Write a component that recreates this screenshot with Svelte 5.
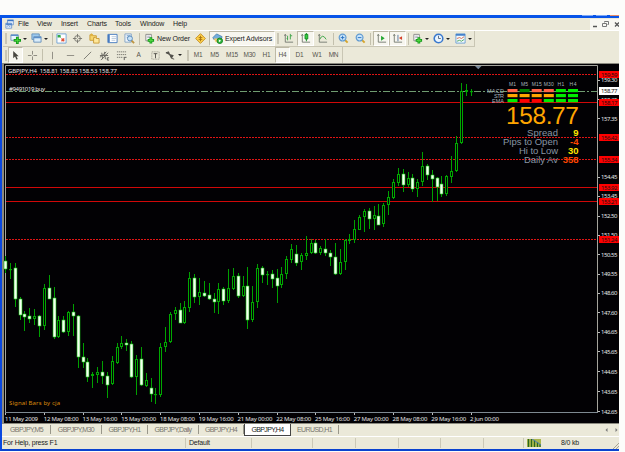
<script lang="ts">
    type Tool = { kind: string; w: number; icon?: string; text?: string; drop?: boolean; on?: boolean };

    const menus = [
        { text: 'File', w: 19 }, { text: 'View', w: 24 }, { text: 'Insert', w: 26 },
        { text: 'Charts', w: 28 }, { text: 'Tools', w: 25 }, { text: 'Window', w: 33 }, { text: 'Help', w: 20 }
    ];

    // all icons are drawn on a 12x12 grid
    const sheetPlus = '<path d="M2 1.5h6v7H2z" fill="#fafafa" stroke="#8a8a88"/><path d="M3.5 3.5h3M3.5 5h3" stroke="#aab"/><path d="M7.5 4.5v7M4 8h7" stroke="#119b18" stroke-width="3"/><path d="M7.5 5.5v5M5 8h5" stroke="#50d640" stroke-width="1.2"/>';
    const cross = '<circle cx="6" cy="6" r="3.2" fill="none" stroke="#77766f"/><path d="M6 1v4M6 7v4M1 6h4M7 6h4" stroke="#77766f"/>';
    const axes = '<path d="M2.5 1.5v8.5H11M1.5 3l1-1.5L3.500 3" fill="none" stroke="#747b70"/>';
    const lens = '<path d="M7.500 7.500l3 3" stroke="#d6a52c" stroke-width="2.2"/><circle cx="5" cy="5" r="3.700" fill="#c8e4fa" stroke="#629bd0" stroke-width="1.3"/>';
    const icons: Record<string, string> = {
        app: '<path d="M3 1h7v6H3zM1 5h7v6H1z" fill="#eef6ff" stroke="#6791cb"/><path d="M3 2h7M1 6h7" stroke="#3976c7" stroke-width="1.500"/><path d="M2 9l2-1 2 1 1-1" stroke="#6791cb" fill="none"/>',
        chartNew: '<path d="M1 2h8v6H1z" fill="#e9f4ff" stroke="#7797bd"/><path d="M1 2.500h8" stroke="#5b8fca" stroke-width="1.500"/><path d="M8 4v8M4 8h8" stroke="#119b18" stroke-width="3"/><path d="M8 5v6M5 8h6" stroke="#50d640"/>',
        profiles: '<path d="M1 1h8v6H1z" fill="#9ccaef" stroke="#6791bb"/><path d="M3 4h8v6H3z" fill="#d9ecfa" stroke="#6791bb"/><path d="M3 5h8" stroke="#5b8fca" stroke-width="1.500"/>',
        market: '<path d="M1 1h10v10H1z" fill="#fff" stroke="#6fa2d5"/><path d="M2.500 5V3H5M3 3l2 2" stroke="#2fa846" stroke-width="1.500" fill="none"/><path d="M6 6l3 3M9 6L6 9" stroke="#e04f35" stroke-width="1.500"/>',
        cross,
        navigator: '<path d="M1 2h3l1 1h3v5H1z" fill="#f6d66d" stroke="#c99a36"/><path d="M5 5h2l1 1h3v5H5z" fill="#ffe89a" stroke="#c99a36"/><path d="M2 1l2 2" stroke="#deb13e" stroke-width="2"/>',
        terminal: '<path d="M1 1.500h10v9H1z" fill="#fff" stroke="#4479bf"/><path d="M2 2v8" stroke="#4479bf" stroke-width="2"/><path d="M5 4h5M5 6h5M5 8h4" stroke="#b9cadd"/>',
        tester: '<path d="M1 1h7v9H1z" fill="#edf4fa" stroke="#85a5c5"/><path d="M3 3h4M3 5h2" stroke="#6f9bc5"/><path d="M8 8l3 3" stroke="#bd9440" stroke-width="2"/><circle cx="6.500" cy="6" r="2.700" fill="#c7e2f6" stroke="#5688bb"/>',
        order: sheetPlus,
        meta: '<path d="M6 .7L11.300 6 6 11.300.7 6z" fill="#ffd34b" stroke="#c28a20"/><path d="M6 3v6M4 5h4M4 7h4" stroke="#a77310"/>',
        expert: '<path d="M1 5l4-4 6 3-1 3H2z" fill="#74aedb" stroke="#4e86b4"/><path d="M2 6h6v4H4z" fill="#f4c969"/><circle cx="8.500" cy="8.500" r="3" fill="#31b63d" stroke="#118321"/><path d="M7.500 7v3L10 8.500z" fill="#fff"/>',
        bars: axes + '<path d="M5 3v5M5 6H4M8 1v6M8 3h2" stroke="#39a244"/>',
        candles: axes + '<path d="M7 0v9" stroke="#128b20"/><path d="M5.500 1.500h3v5h-3z" fill="#37cd41" stroke="#128b20"/>',
        line: axes + '<path d="M3 7q3-7 7 0" fill="none" stroke="#39a244"/>',
        zoomIn: lens + '<path d="M5 3v4M3 5h4" stroke="#2872bf"/>',
        zoomOut: lens + '<path d="M3 5h4" stroke="#2872bf"/>',
        scroll: axes + '<path d="M5.500 3v5.500L9.500 5.700z" fill="#25a733"/>',
        shift: axes + '<path d="M6.500 2v7" stroke="#55749b"/><path d="M11 3.500v4L7.500 5.500z" fill="#d5422b"/>',
        clock: '<circle cx="6" cy="6" r="4.700" fill="#e9f4ff" stroke="#3978cd" stroke-width="1.700"/><path d="M6 3v3h2.500" fill="none" stroke="#53657b"/>',
        template: '<path d="M1 1h10v10H1z" fill="#f4faff" stroke="#6c9fd4"/><path d="M1 2h10" stroke="#4481ca" stroke-width="2"/><path d="M2 6l3-1 2 1 3-2" stroke="#d0694a" fill="none"/><path d="M2 9l3-1 2 1 3-2" stroke="#4aa65c" fill="none"/>',
        cursor: '<path d="M3.500 1v8l2-1.800L7 10.500l1.500-.7L7 6.800h2.500z" fill="#484740"/>',
        plus: '<path d="M6 1v4M6 7v4M1 6h4M7 6h4" stroke="#85847b"/>',
        vert: '<path d="M6 2v8" stroke="#8b8a80"/>',
        horiz: '<path d="M2 6h8" stroke="#8b8a80"/>',
        trend: '<path d="M2 10l8-8" stroke="#77766d"/>',
        channel: '<path d="M1 8l7-6M2 11l8-8M3 3l1 7M6 2l1 8M1 6h9" stroke="#67665f"/><path d="M9 8.500h2M9 11h2M9 8.500V11" stroke="#333" stroke-width=".8"/>',
        fibo: '<path d="M1 2h10M1 5h10M1 8h7" stroke="#77766d" stroke-dasharray="1.500 .7"/><path d="M9 8h2.500M9 8v3" stroke="#333" stroke-width=".8"/>',
        label: '<path d="M2 2h8v8H2z" fill="none" stroke="#8c8b80" stroke-dasharray="1 1"/><path d="M4 4h4M6 4v5" stroke="#4f4e48"/>',
        arrows: '<path d="M1 3l3-1 1 3zM5 5l4 1-2 3zM7 9l3 1" fill="#4f4e48" stroke="#4f4e48"/>'
    };

    const mainTools: Tool[] = [
        { kind: 'grip', w: 6 },
        { kind: 'btn', icon: 'chartNew', w: 21, drop: true },
        { kind: 'btn', icon: 'profiles', w: 21, drop: true },
        { kind: 'sep', w: 3 },
        { kind: 'btn', icon: 'market', w: 15 },
        { kind: 'btn', icon: 'cross', w: 17 },
        { kind: 'btn', icon: 'navigator', w: 17 },
        { kind: 'btn', icon: 'terminal', w: 18 },
        { kind: 'btn', icon: 'tester', w: 16 },
        { kind: 'sep', w: 4 },
        { kind: 'btn', icon: 'order', text: 'New Order', w: 51 },
        { kind: 'btn', icon: 'meta', w: 17 },
        { kind: 'btn', icon: 'expert', text: 'Expert Advisors', w: 66, on: true },
        { kind: 'grip', w: 5 },
        { kind: 'btn', icon: 'bars', w: 17 },
        { kind: 'btn', icon: 'candles', w: 17, on: true },
        { kind: 'btn', icon: 'line', w: 17 },
        { kind: 'sep', w: 4 },
        { kind: 'btn', icon: 'zoomIn', w: 17 },
        { kind: 'btn', icon: 'zoomOut', w: 16 },
        { kind: 'sep', w: 5 },
        { kind: 'btn', icon: 'scroll', w: 16, on: true },
        { kind: 'btn', icon: 'shift', w: 17, on: true },
        { kind: 'sep', w: 5 },
        { kind: 'btn', icon: 'order', w: 21, drop: true },
        { kind: 'btn', icon: 'clock', w: 22, drop: true },
        { kind: 'btn', icon: 'template', w: 20, drop: true }
    ];

    const lineTools: Tool[] = [
        { kind: 'grip', w: 5 },
        { kind: 'btn', icon: 'cursor', w: 15, on: true },
        { kind: 'btn', icon: 'plus', w: 18 },
        { kind: 'sep', w: 2 },
        { kind: 'btn', icon: 'vert', w: 18 },
        { kind: 'btn', icon: 'horiz', w: 18 },
        { kind: 'btn', icon: 'trend', w: 17 },
        { kind: 'btn', icon: 'channel', w: 17 },
        { kind: 'btn', icon: 'fibo', w: 17 },
        { kind: 'period', text: 'A', w: 17 },
        { kind: 'btn', icon: 'label', w: 17 },
        { kind: 'btn', icon: 'arrows', w: 21, drop: true },
        { kind: 'grip', w: 5 },
        { kind: 'period', text: 'M1', w: 16 },
        { kind: 'period', text: 'M5', w: 17 },
        { kind: 'period', text: 'M15', w: 18 },
        { kind: 'period', text: 'M30', w: 17 },
        { kind: 'period', text: 'H1', w: 17 },
        { kind: 'period', text: 'H4', w: 15, on: true },
        { kind: 'period', text: 'D1', w: 19 },
        { kind: 'period', text: 'W1', w: 16 },
        { kind: 'period', text: 'MN', w: 17 }
    ];

    // high, body top, body bottom, low, 1 = falling
    const candles = [
        [256,261,269,273,1],[263,269,270,279,0],[263,268,299,307,1],[297,299,315,320,1],[311,314,317,331,1],
        [308,316,319,323,1],[309,316,319,325,0],[315,316,326,337,1],[284,288,326,330,0],[275,288,299,299,1],
        [287,298,337,339,1],[316,320,337,338,0],[316,320,332,333,1],[311,312,332,336,0],[304,312,316,336,1],
        [315,316,357,368,1],[343,357,362,368,1],[358,362,377,382,1],[372,374,376,388,0],[367,372,375,383,0],
        [361,372,376,384,1],[372,376,385,398,1],[356,361,384,385,0],[343,347,363,364,0],[336,343,347,349,0],
        [339,343,345,351,1],[341,344,377,378,1],[355,359,377,395,0],[347,359,385,386,1],[373,380,386,387,0],
        [378,388,394,402,1],[388,394,395,404,0],[343,347,395,397,0],[327,342,347,352,0],[312,314,342,343,0],
        [307,310,314,320,0],[303,310,323,323,1],[301,307,323,324,0],[272,278,308,312,0],[274,278,297,303,1],
        [278,292,297,305,0],[281,293,296,297,1],[283,295,299,300,1],[293,299,302,313,1],[283,289,302,314,0],
        [287,289,301,305,1],[269,288,301,303,0],[268,276,289,290,0],[273,276,296,298,1],[276,286,296,297,0],
        [267,286,320,329,1],[286,302,320,322,0],[264,268,302,308,0],[266,268,275,283,1],[271,274,275,285,0],
        [270,274,279,288,1],[269,278,286,303,1],[267,274,285,288,0],[256,259,274,279,0],[244,249,260,263,0],
        [245,254,263,266,1],[253,255,262,270,0],[236,253,256,260,0],[239,243,253,254,0],[240,243,253,254,1],
        [246,248,253,255,0],[239,249,253,256,1],[250,253,257,266,1],[243,257,274,275,1],[249,262,274,275,0],
        [239,240,262,270,0],[234,239,241,244,0],[220,229,240,243,0],[215,217,230,230,0],[209,211,217,232,0],
        [208,211,219,229,1],[206,215,219,230,0],[204,216,225,225,1],[203,205,224,227,0],[191,197,205,215,0],
        [179,182,198,199,0],[168,174,183,186,0],[169,174,185,192,1],[172,178,185,187,0],[174,178,189,192,1],
        [179,182,189,197,0],[152,166,182,186,0],[164,166,175,180,1],[170,175,179,202,1],[177,178,187,201,1],
        [176,184,194,197,1],[175,176,194,196,0],[156,171,177,183,0],[136,143,171,172,0],[83,91,143,144,0],
        [84,90,92,96,0],[89,91,92,96,0]
    ];
    const candleX = (i: number) => Math.floor(5.5 + i * 4.85) + 0.5;

    const levels = [
        { y: 74.5, text: '159.59', dotted: true }, { y: 102.5, text: '158.17', dotted: false },
        { y: 137.5, text: '156.42', dotted: true }, { y: 159.5, text: '155.34', dotted: true },
        { y: 187.5, text: '153.92', dotted: false }, { y: 201.5, text: '153.21', dotted: false },
        { y: 239.5, text: '151.24', dotted: true }
    ];

    const prices: [string, number][] = [
        ['159.30', 80], ['158.35', 99.5], ['157.35', 118.5], ['154.45', 177], ['153.45', 196], ['152.50', 216],
        ['151.50', 235], ['150.55', 254.5], ['149.55', 274], ['148.60', 293], ['147.60', 312.5], ['146.65', 332],
        ['145.65', 351.5], ['144.65', 371.5], ['143.65', 391.5], ['142.65', 411.5]
    ];

    const dates = [
        '11 May 2009', '12 May 08:00', '13 May 16:00', '15 May 00:00', '18 May 08:00', '19 May 16:00', '21 May 00:00',
        '22 May 08:00', '25 May 16:00', '27 May 00:00', '28 May 08:00', '29 May 16:00', '2 Jun 00:00'
    ];

    const frames = ['M1', 'M5', 'M15', 'M30', 'H1', 'H4'];
    const tomato = '#ff6347', green = '#008000', lime = '#00ee00', orange = '#ffa500', red = '#ff0000';
    const signals = [
        { name: 'MACD', w: 17, cells: [tomato, green, tomato, tomato, lime, lime] },
        { name: 'STR', w: 10, cells: [orange, orange, orange, orange, lime, lime] },
        { name: 'EMA', w: 12, cells: [lime, red, red, lime, lime, lime] }
    ];
    const stats = [
        { name: 'Spread', w: 31, value: '9', color: '#ffe600' },
        { name: 'Pips to Open', w: 55, value: '-4', color: '#ff4500' },
        { name: 'Hi to Low', w: 39, value: '30', color: '#ffe600' },
        { name: 'Daily Av', w: 34, value: '358', color: '#ff4500' }
    ];

    const tabs = [
        { text: 'GBPJPY,M5', w: 48 }, { text: 'GBPJPY,M30', w: 51 }, { text: 'GBPJPY,H1', w: 46 },
        { text: 'GBPJPY,Daily', w: 51 }, { text: 'GBPJPY,H4', w: 45 }, { text: 'GBPJPY,H4', w: 47, active: true },
        { text: 'EURUSD,H1', w: 48 }
    ];
    const statusCells = [183, 66, 61, 43, 43, 42, 43, 40];
</script>

{#snippet toolbar(items: Tool[])}
    {#each items as t}
        <div class="tool {t.kind}" class:on={t.on} class:drop={t.drop} class:wide={t.icon && t.text} style="width: {t.w}px">
            {#if t.icon}
                <svg class="icon" viewBox="0 0 12 12">{@html icons[t.icon]}</svg>
            {/if}
            {#if t.text}<span>{t.text}</span>{/if}
            {#if t.drop}<i class="arrow"></i>{/if}
        </div>
    {/each}
{/snippet}

<div class="page">
    <div class="window">
        <div class="title"><i></i><i></i><i class="x"></i></div>
        <div class="menu">
            <svg class="icon app" viewBox="0 0 12 12">{@html icons.app}</svg>
            {#each menus as m}
                <span style="width: {m.w}px">{m.text}</span>
            {/each}
            <div class="controls">
                <svg viewBox="0 0 29 11">
                    <path d="M3 7.500h4" stroke="#555" stroke-width="1.500" />
                    <path d="M14.500 3.500v-1h4v3h-1M12.500 4.500h4v3h-4z" fill="none" stroke="#777" />
                    <path d="M25 3.500l4 4M29 3.500l-4 4" stroke="#555" stroke-width="1.300" />
                </svg>
            </div>
        </div>
        <div class="bar"><div class="strip">{@render toolbar(mainTools)}</div></div>
        <div class="bar second"><div class="strip">{@render toolbar(lineTools)}</div></div>

        <svg class="chart" viewBox="2 63 617 361">
            <rect x="2" y="63" width="617" height="361" fill="#8a897f" />
            <rect x="4" y="64" width="615" height="359" fill="#020104" />
            <path d="M5.500 413V65.500H597.500V413" fill="none" stroke="#a4a49c" />
            <path d="M5 412.500H598" stroke="#7e8991" />
            <path d="M475 66h6.500l-3.200 3.200z" fill="#778899" />

            {#each levels as l}
                <path class="level" class:dotted={l.dotted} d="M6 {l.y}H597" />
            {/each}
            <path d="M6 91.500H597" stroke="#6f9c70" stroke-dasharray="7 2 2 2" />

            {#each candles as [high, top, bottom, low, down], i}
                <path class="wick" d="M{candleX(i)} {high}V{low}" />
                {#if down}
                    <rect class="down" x={candleX(i) - 1.5} y={top} width="3" height={bottom - top} />
                {:else}
                    <rect class="up" x={candleX(i) - 1} y={top + 0.5} width="2" height={Math.max(bottom - top - 1, 0.2)} />
                {/if}
            {/each}

            <text class="small" x="8" y="73" textLength="109">GBPJPY,H4&nbsp; 158.81 158.83 158.53 158.77</text>
            <text class="small" x="9" y="90.500" textLength="36">#9491019 buy</text>
            <text class="small credit" x="9" y="404.500" textLength="51">Signal Bars by cja</text>

            {#each frames as f, i}
                <text class="frame" x={512.5 + i * 12.1} y="86" textLength={f.length > 2 ? 10 : 7}>{f}</text>
            {/each}
            {#each signals as s, r}
                <text class="signal" x="504" y={92.5 + r * 5.1} textLength={s.w}>{s.name}</text>
                {#each s.cells as c, i}
                    <rect x={507.5 + i * 12.1} y={89 + r * 5} width="10" height="3.200" fill={c} />
                {/each}
            {/each}
            <text class="quote" x="506" y="123.500" textLength="73">158.77</text>
            {#each stats as s, i}
                <text class="stat" x="558" y={136 + i * 9.1} textLength={s.w}>{s.name}</text>
                <text class="value" x="578.500" y={136 + i * 9.1} fill={s.color}>{s.value}</text>
            {/each}

            {#each prices as [text, y]}
                <path d="M598 {Math.floor(y) + 0.5}h2" stroke="#bbb" />
                <text class="small" x="601" y={y + 2.3} textLength="16.500">{text}</text>
            {/each}
            {#each levels as l}
                <rect x="599" y={l.y - 3.5} width="20" height="7" fill="#ff0000" />
                <text class="small tag" x="601" y={l.y + 2.3} textLength="16.500">{l.text}</text>
            {/each}
            <rect x="599" y="87" width="20" height="8" fill="#fff" />
            <text class="small tag" x="601" y="93.300" textLength="16.500">158.77</text>

            {#each dates as d, i}
                <path d="M{Math.floor(5.5 + i * 38.8) + 0.5} 413v2" stroke="#bbb" />
                <text class="small" x={5 + i * 38.75} y="420.800" textLength={i === 0 ? 33 : i === 12 ? 29 : 35}>{d}</text>
            {/each}
        </svg>

        <div class="tabs">
            {#each tabs as t}
                <div class="tab" class:active={t.active} style="width: {t.w}px">{t.text}</div>
            {/each}
            <svg class="pager" viewBox="0 0 14 8"><path d="M3.500 2v4L1.500 4zM11.500 2v4l2-2z" fill="#777" /></svg>
        </div>
        <div class="status">
            {#each statusCells as w, i}
                <div class="cell" style="width: {w}px">{i === 0 ? 'For Help, press F1' : i === 1 ? 'Default' : ''}</div>
            {/each}
            <svg class="signal-icon" viewBox="0 0 14 8">
                <rect width="14" height="8" fill="#a9b64b" />
                <path d="M1.500 0v8M4.500 0v8M7.500 1v7M10.500 3v5M13 5v3" stroke="#2b651e" stroke-width="1.200" />
                <path d="M5 0L14 6" stroke="#507fb4" />
            </svg>
            <span class="traffic">8/0 kb</span>
            <svg class="resize" viewBox="0 0 6 6"><path d="M0 6l6-6M3 6l3-3" stroke="#a7a493" /></svg>
        </div>
    </div>
</div>

<style>
    :global(body) {
        margin: 0;
        background: #fcfcfa;
    }
    .page {
        box-sizing: border-box;
        height: 452px;
        padding-top: 15px;
        font: 7px/10px "Liberation Sans", Arial, sans-serif;
        color: #222;
        overflow: hidden;
    }
    .window {
        box-sizing: border-box;
        width: 619px;
        height: 436px;
        border-left: 2px solid #0b49e0;
        border-bottom: 2px solid #0a43cf;
        background: #ebe9d9;
    }
    .title {
        display: flex;
        justify-content: flex-end;
        gap: 3px;
        height: 3px;
        margin-left: -2px;
        background: #0754e8;
    }
    .title i {
        width: 11px;
        height: 1px;
        background: #7ea8f5;
    }
    .title .x {
        width: 9px;
        background: #e58b68;
    }
    .menu {
        display: flex;
        align-items: center;
        height: 12px;
        border-bottom: 1px solid #fff;
        letter-spacing: -0.1px;
    }
    .menu span {
        white-space: nowrap;
    }
    .icon {
        flex: none;
        width: 11px;
        height: 11px;
    }
    .app {
        width: 10px;
        height: 10px;
        margin: 0 3px;
    }
    .controls {
        width: 29px;
        height: 11px;
        margin-left: auto;
        background: #f8f7f2;
    }
    .controls svg {
        display: block;
    }
    .bar {
        display: flex;
        box-sizing: border-box;
        height: 16px;
        padding-left: 1px;
    }
    .strip {
        display: flex;
        border-right: 1px solid #c9c6b4;
        border-bottom: 1px solid #c9c6b4;
    }
    .second .strip {
        border-bottom: 0;
    }
    .tool {
        display: flex;
        flex: none;
        align-items: center;
        justify-content: center;
        box-sizing: border-box;
        white-space: nowrap;
    }
    .drop {
        justify-content: flex-start;
        gap: 2px;
        padding-left: 1px;
    }
    .wide {
        justify-content: flex-start;
        gap: 2px;
        padding-left: 3px;
        letter-spacing: -0.1px;
    }
    .on {
        border: 1px solid #bdb9a6;
        border-right-color: #fff;
        border-bottom-color: #fff;
        background: #f7f6ef;
    }
    .wide.on {
        padding-left: 2px;
    }
    .period {
        font-size: 6.5px;
        color: #55544c;
        letter-spacing: -0.2px;
    }
    .sep::before {
        content: "";
        width: 1px;
        height: 12px;
        background: #c3c0ad;
    }
    .grip::before {
        content: "";
        width: 2px;
        height: 11px;
        background: #c9c6b5;
    }
    .arrow {
        border: 2px solid transparent;
        border-top-color: #222;
        border-bottom: 0;
    }
    .chart {
        display: block;
        width: 617px;
        height: 361px;
    }
    .chart text {
        font-family: "Liberation Sans", Arial, sans-serif;
    }
    .chart .small {
        font-family: "Noto Sans", sans-serif;
        font-size: 6px;
        fill: #e4e4e4;
    }
    .chart .credit {
        fill: #d98a0c;
    }
    .chart .tag {
        fill: #181010;
    }
    .level {
        stroke: #d00808;
        shape-rendering: crispEdges;
    }
    .dotted {
        stroke: #e01414;
        stroke-dasharray: 2 1;
    }
    .wick {
        stroke: #00a000;
    }
    .up {
        fill: #020104;
        stroke: #00a800;
    }
    .down {
        fill: #f4fff0;
        stroke: #12c812;
        stroke-width: 0.6;
    }
    .frame {
        font-size: 5px;
        fill: #a9b4bd;
        text-anchor: middle;
    }
    .signal {
        font-size: 5.5px;
        fill: #a9b4bd;
        text-anchor: end;
    }
    .quote {
        font-size: 24.5px;
        fill: #ffa500;
    }
    .stat {
        font-size: 9.5px;
        fill: #8796a5;
        text-anchor: end;
    }
    .value {
        font-size: 9.5px;
        font-weight: bold;
        text-anchor: end;
    }
    .tabs {
        display: flex;
        height: 12px;
        padding-left: 1px;
        color: #77756c;
        letter-spacing: -0.6px;
        border-bottom: 1px solid #fff;
    }
    .tab {
        box-sizing: border-box;
        height: 9px;
        margin-top: 1px;
        line-height: 9px;
        text-align: center;
        border-right: 1px solid #99978a;
    }
    .active {
        height: 12px;
        margin-top: 0;
        line-height: 11px;
        border: 1px solid #444;
        border-top: 0;
        background: #fff;
        color: #222;
    }
    .pager {
        width: 14px;
        height: 8px;
        margin: 2px 1px 0 auto;
    }
    .status {
        display: flex;
        align-items: center;
        height: 12px;
        padding-left: 1px;
        letter-spacing: -0.2px;
    }
    .cell {
        box-sizing: border-box;
        height: 10px;
        padding-right: 1px;
        border-right: 1px solid #cbc8b6;
    }
    .cell + .cell {
        padding-left: 3px;
    }
    .signal-icon {
        width: 14px;
        height: 8px;
        margin-left: 3px;
    }
    .traffic {
        margin-left: 20px;
    }
    .resize {
        width: 6px;
        height: 6px;
        margin: 5px 0 0 auto;
    }
</style>
